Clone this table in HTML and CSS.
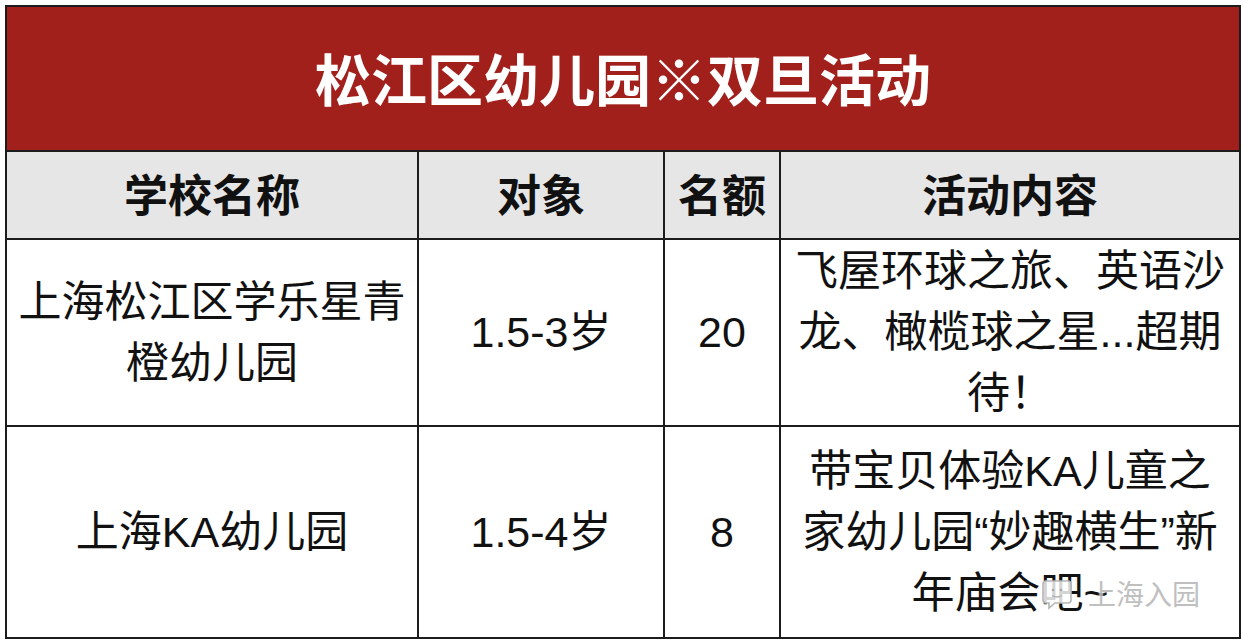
FILE: index.html
```html
<!DOCTYPE html>
<html lang="zh-CN">
<head>
<meta charset="utf-8">
<title>松江区幼儿园※双旦活动</title>
<link rel="stylesheet" href="styles.css">
</head>
<body>
<div class="page">
  <table class="sheet">
    <colgroup>
      <col class="c1"><col class="c2"><col class="c3"><col class="c4">
    </colgroup>
    <tr class="title-row"><td colspan="4">松江区幼儿园※双旦活动</td></tr>
    <tr class="head-row">
      <th>学校名称</th><th>对象</th><th>名额</th><th>活动内容</th>
    </tr>
    <tr class="row1">
      <td class="name">上海松江区学乐星青橙幼儿园</td>
      <td>1.5-3岁</td>
      <td>20</td>
      <td class="desc">飞屋环球之旅、英语沙龙、橄榄球之星...超期待！</td>
    </tr>
    <tr class="row2">
      <td class="name">上海KA幼儿园</td>
      <td>1.5-4岁</td>
      <td>8</td>
      <td class="desc">带宝贝体验KA儿童之家幼儿园“妙趣横生”新年庙会吧~</td>
    </tr>
  </table>
  <div class="watermark">
    <svg class="wm-icon" viewBox="0 0 34 36" width="34" height="36">
      <path d="M6 6h22a3 3 0 0 1 3 3v16a3 3 0 0 1-3 3H15l-6 5v-5H6a3 3 0 0 1-3-3V9a3 3 0 0 1 3-3z" fill="#ffffff" fill-opacity="0.82" stroke="#b5b5b5" stroke-width="1.6"/>
      <circle cx="13" cy="15" r="1.3" fill="#a8a8a8"/>
      <circle cx="21" cy="15" r="1.3" fill="#a8a8a8"/>
      <path d="M12 20.5q5 3 10 0" fill="none" stroke="#b0b0b0" stroke-width="1.3"/>
    </svg>
    <span class="wm-text">上海入园</span>
  </div>
</div>
</body>
</html>
```
FILE: styles.css
```css
html, body {
  margin: 0;
  padding: 0;
  background: #ffffff;
}
.page {
  position: relative;
  width: 1243px;
  height: 643px;
  padding: 5px 0 0 5px;
  box-sizing: border-box;
  font-family: "Liberation Sans", "Noto Sans CJK SC", sans-serif;
  color: #111111;
}
.sheet {
  border-collapse: collapse;
  table-layout: fixed;
  width: 1234px;
  border: 2px solid #1c1c1c;
}
.sheet td, .sheet th {
  border: 2px solid #1c1c1c;
  text-align: center;
  vertical-align: middle;
  padding: 0 12px;
}
.c1 { width: 412px; }
.c2 { width: 246px; }
.c3 { width: 116px; }
.c4 { width: 460px; }

.title-row td {
  height: 139px;
  background: #a2201c;
  color: #ffffff;
  font-family: "Noto Sans CJK SC", sans-serif;
  font-weight: 700;
  font-size: 56px;
  line-height: 1;
  padding: 0 0 4px;
}
.head-row th {
  height: 82px;
  background: #e6e6e6;
  font-family: "Noto Sans CJK SC", sans-serif;
  font-weight: 700;
  font-size: 44px;
  line-height: 1;
  padding-bottom: 4px;
}
.row1 td, .row2 td {
  font-size: 43px;
  font-weight: 400;
  line-height: 61px;
}
.row1 td { height: 185px; }
.row2 td { height: 210px; }
.sheet td.desc {
  padding: 0 14px;
}
.sheet td.name {
  padding: 0 10px;
}

.watermark {
  position: absolute;
  left: 1040px;
  top: 573px;
  display: flex;
  align-items: center;
  gap: 14px;
}
.wm-icon {
  display: block;
}
.wm-text {
  font-family: "Noto Sans CJK SC", sans-serif;
  font-size: 28px;
  color: #b9b9b9;
  text-shadow: 0 0 2px #ffffff, 0 0 2px #ffffff;
  opacity: 0.9;
}
```
